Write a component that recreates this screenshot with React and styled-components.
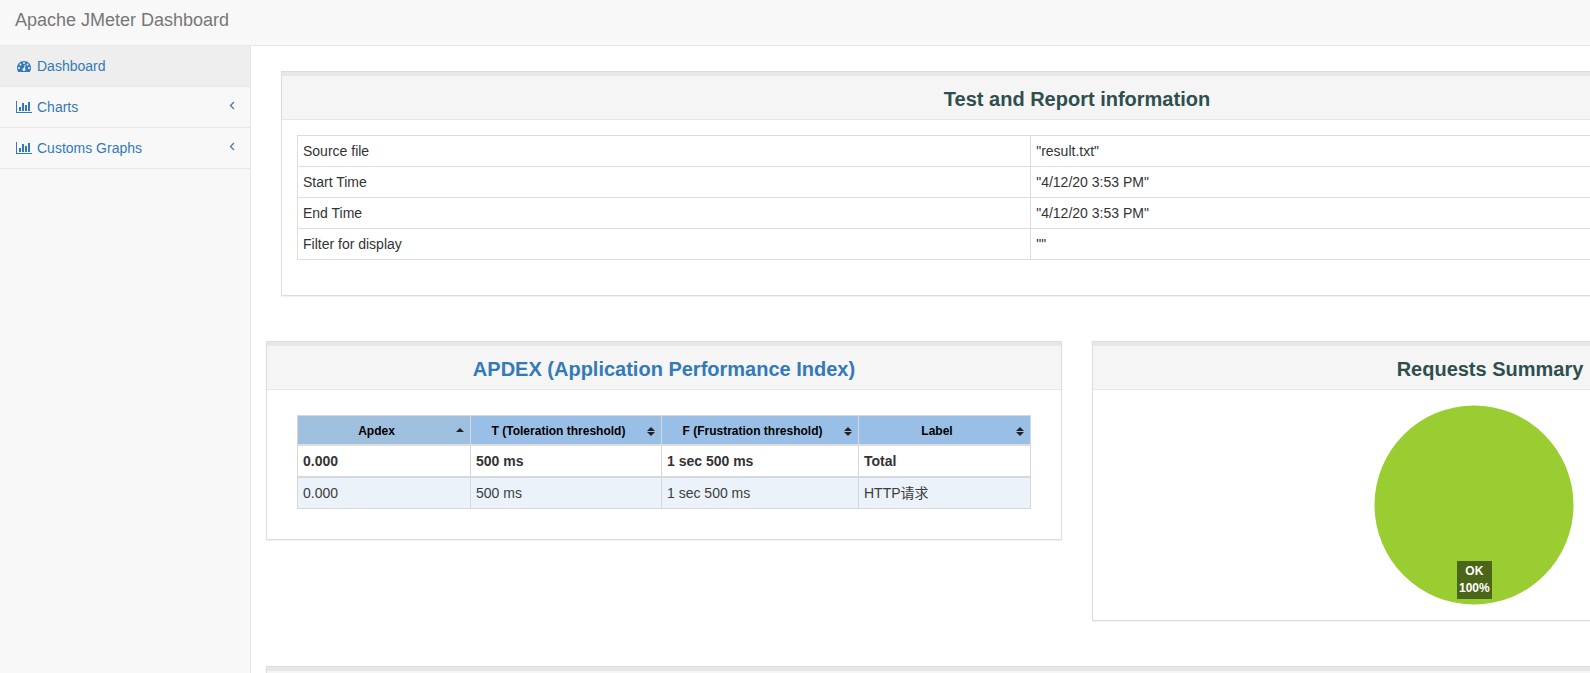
import React from "react";
import styled, { createGlobalStyle } from "styled-components";

const infoRows = [
  ["Source file", '"result.txt"'],
  ["Start Time", '"4/12/20 3:53 PM"'],
  ["End Time", '"4/12/20 3:53 PM"'],
  ["Filter for display", '""'],
];

const apdexColumns = [
  { name: "Apdex", width: 173 },
  { name: "T (Toleration threshold)", width: 191 },
  { name: "F (Frustration threshold)", width: 197 },
  { name: "Label", width: 172 },
];

function DashboardIcon() {
  return (
    <svg width="14" height="14" viewBox="0 0 1792 1792" aria-hidden="true">
      <path d="M384 1152q0-53-37.5-90.5t-90.5-37.5-90.5 37.5-37.5 90.5 37.5 90.5 90.5 37.5 90.5-37.5 37.5-90.5zm192-448q0-53-37.5-90.5t-90.5-37.5-90.5 37.5-37.5 90.5 37.5 90.5 90.5 37.5 90.5-37.5 37.5-90.5zm428 481l101-382q6-26-7.5-48.5t-38.5-29.5-48 6.5-30 39.5l-101 382q-60 5-107 43.5t-63 98.5q-20 77 20 146t117 89 146-20 89-117q16-60-6-117t-72-91zm660-33q0-53-37.5-90.5t-90.5-37.5-90.5 37.5-37.5 90.5 37.5 90.5 90.5 37.5 90.5-37.5 37.5-90.5zm-640-640q0-53-37.5-90.5t-90.5-37.5-90.5 37.5-37.5 90.5 37.5 90.5 90.5 37.5 90.5-37.5 37.5-90.5zm448 192q0-53-37.5-90.5t-90.5-37.5-90.5 37.5-37.5 90.5 37.5 90.5 90.5 37.5 90.5-37.5 37.5-90.5zm320 448q0 261-141 483-19 29-54 29h-1402q-35 0-54-29-141-221-141-483 0-182 71-348t191-286 286-191 348-71 348 71 286 191 191 286 71 348z" />
    </svg>
  );
}

function ChartIcon() {
  return (
    <svg width="16" height="14" viewBox="0 0 2048 1792" aria-hidden="true">
      <path d="M640 896v512h-256v-512h256zm384-512v1024h-256v-1024h256zm1024 1152v128h-2048v-1536h128v1408h1920zm-640-896v768h-256v-768h256zm384-384v1152h-256v-1152h256z" />
    </svg>
  );
}

function Sorter({ ascending }) {
  return (
    <SortIcon width="8" height="9" viewBox="0 0 8 9" aria-hidden="true">
      {ascending ? (
        <path d="M4 1 L8 5 H0 Z" />
      ) : (
        <path d="M4 0 L8 4 H0 Z M0 5 H8 L4 9 Z" />
      )}
    </SortIcon>
  );
}

function NavItem({ icon, label, active, expandable }) {
  return (
    <li>
      <NavLink href="#" $active={active}>
        <IconSlot>{icon}</IconSlot>
        {label}
        {expandable && (
          <Arrow width="6" height="9" viewBox="0 0 6 9" aria-hidden="true">
            <path d="M5 1 L1.5 4.5 L5 8" />
          </Arrow>
        )}
      </NavLink>
    </li>
  );
}

export default function App() {
  return (
    <Page>
      <GlobalStyle />
      <Navbar>
        <Brand href="#">Apache JMeter Dashboard</Brand>
      </Navbar>
      <Layout>
        <Sidebar>
          <NavList>
            <NavItem icon={<DashboardIcon />} label="Dashboard" active />
            <NavItem icon={<ChartIcon />} label="Charts" expandable />
            <NavItem icon={<ChartIcon />} label="Customs Graphs" expandable />
          </NavList>
        </Sidebar>
        <Main>
          <Content>
            <Inset>
              <Panel>
                <Heading>Test and Report information</Heading>
                <Body>
                  <InfoTable>
                    <tbody>
                      {infoRows.map(([name, value]) => (
                        <tr key={name}>
                          <td>{name}</td>
                          <td>{value}</td>
                        </tr>
                      ))}
                    </tbody>
                  </InfoTable>
                </Body>
              </Panel>
            </Inset>

            <Columns>
              <Panel>
                <Heading>
                  <a href="#apdex">APDEX (Application Performance Index)</a>
                </Heading>
                <Body>
                  <ApdexWrap>
                    <ApdexTable>
                      <thead>
                        <tr>
                          {apdexColumns.map(({ name, width }, i) => (
                            <HeaderCell
                              key={name}
                              $width={width}
                              $sorted={i === 0}
                            >
                              {name}
                              <Sorter ascending={i === 0} />
                            </HeaderCell>
                          ))}
                        </tr>
                      </thead>
                      <TotalBody>
                        <tr>
                          <td>0.000</td>
                          <td>500 ms</td>
                          <td>1 sec 500 ms</td>
                          <td>Total</td>
                        </tr>
                      </TotalBody>
                      <ResultBody>
                        <tr>
                          <td>0.000</td>
                          <td>500 ms</td>
                          <td>1 sec 500 ms</td>
                          <td>HTTP请求</td>
                        </tr>
                      </ResultBody>
                    </ApdexTable>
                  </ApdexWrap>
                </Body>
              </Panel>

              <Panel>
                <Heading>Requests Summary</Heading>
                <Body>
                  <Chart>
                    <Pie>
                      <svg width="200" height="200" viewBox="0 0 200 200">
                        <circle cx="100" cy="100" r="99.5" fill="#9acd32" />
                      </svg>
                      <PieLabel>
                        OK
                        <br />
                        100%
                      </PieLabel>
                    </Pie>
                  </Chart>
                </Body>
              </Panel>
            </Columns>

            <Panel>
              <Heading />
            </Panel>
          </Content>
        </Main>
      </Layout>
    </Page>
  );
}

const GlobalStyle = createGlobalStyle`
  * {
    box-sizing: border-box;
  }
  body {
    margin: 0;
    background-color: #fff;
    color: #333;
    font-family: "Liberation Sans", Arial, "Noto Sans CJK SC", sans-serif;
    font-size: 14px;
    line-height: 20px;
  }
  a {
    color: #337ab7;
    text-decoration: none;
  }
`;

const Page = styled.div`
  display: flex;
  flex-direction: column;
  height: 100vh;
  overflow: hidden;
`;

const Navbar = styled.header`
  flex: none;
  display: flex;
  padding: 10px 15px 15px;
  background-color: #f8f8f8;
  border-bottom: 1px solid #e7e7e7;
`;

const Brand = styled.a`
  color: #777;
  font-size: 18px;
`;

const Layout = styled.div`
  flex: 1;
  display: flex;
  min-height: 0;
`;

const Sidebar = styled.nav`
  flex: none;
  width: 250px;
  background-color: #f8f8f8;
`;

const NavList = styled.ul`
  list-style: none;
  margin: 0;
  padding: 0;

  li {
    border-bottom: 1px solid #e7e7e7;
  }
`;

const NavLink = styled.a`
  display: flex;
  align-items: center;
  padding: 10px 15px;
  background-color: ${(props) => (props.$active ? "#eee" : "transparent")};
`;

const IconSlot = styled.span`
  display: flex;
  justify-content: center;
  width: 18px;
  margin-right: 4px;

  svg {
    fill: currentColor;
  }
`;

const Arrow = styled.svg`
  margin-left: auto;
  margin-bottom: 4px;
  fill: none;
  stroke: #54779a;
  stroke-width: 1.3;
`;

const Main = styled.main`
  flex: 1;
  min-width: 0;
  overflow: hidden;
  border-left: 1px solid #e7e7e7;
`;

/* the report is wider than the window and runs off its right side */
const Content = styled.div`
  display: flex;
  flex-direction: column;
  gap: 45px;
  width: calc(100% + 313px);
  padding: 25px 15px;
`;

const Inset = styled.div`
  padding: 0 15px;
`;

const Columns = styled.div`
  display: grid;
  grid-template-columns: 1fr 1fr;
  align-items: start;
  gap: 30px;
`;

const Panel = styled.section`
  background-color: #fff;
  border: 1px solid #ddd;
  box-shadow: 0 1px 1px rgba(0, 0, 0, 0.05);
`;

const Heading = styled.h2`
  min-height: 48px;
  margin: 0;
  padding: 16px 15px 9px;
  background-color: #f5f5f5;
  border-bottom: 1px solid #e7e7e7;
  box-shadow: inset 0 4px 0 #e7e7e7;
  color: #2f4f4f;
  font-size: 20px;
  line-height: 22px;
  text-align: center;
`;

const Body = styled.div`
  padding: 15px;
`;

const InfoTable = styled.table`
  width: 100%;
  margin-bottom: 20px;
  border-collapse: collapse;

  td {
    padding: 5px;
    border: 1px solid #ddd;
  }
`;

const ApdexWrap = styled.div`
  padding: 10px 15px 15px;
`;

const ApdexTable = styled.table`
  width: 100%;
  border-collapse: collapse;

  th,
  td {
    border: 1px solid #d5d9de;
  }
  td {
    padding: 5px;
  }
`;

const HeaderCell = styled.th`
  position: relative;
  width: ${(props) => props.$width}px;
  padding: 5px 20px 3px 5px;
  background-color: ${(props) => (props.$sorted ? "#9fbfdf" : "#99bfe6")};
  color: #000;
  font-size: 12px;
`;

const SortIcon = styled.svg`
  position: absolute;
  top: 11px;
  right: 6px;
  fill: #222;
`;

const TotalBody = styled.tbody`
  font-weight: bold;

  td {
    border-top: 2px solid #ddd;
  }
`;

const ResultBody = styled.tbody`
  background-color: #ebf2fa;
  color: #3d3d3d;

  td {
    border-top: 2px solid #d5d9de;
  }
`;

const Chart = styled.div`
  display: flex;
  justify-content: center;
  padding-right: 32px;
`;

const Pie = styled.div`
  position: relative;

  svg {
    display: block;
  }
`;

const PieLabel = styled.div`
  position: absolute;
  left: 83px;
  bottom: 6px;
  padding: 2px;
  background-color: #4b6619;
  color: #fff;
  font-size: 12px;
  font-weight: bold;
  line-height: 17px;
  text-align: center;
`;
